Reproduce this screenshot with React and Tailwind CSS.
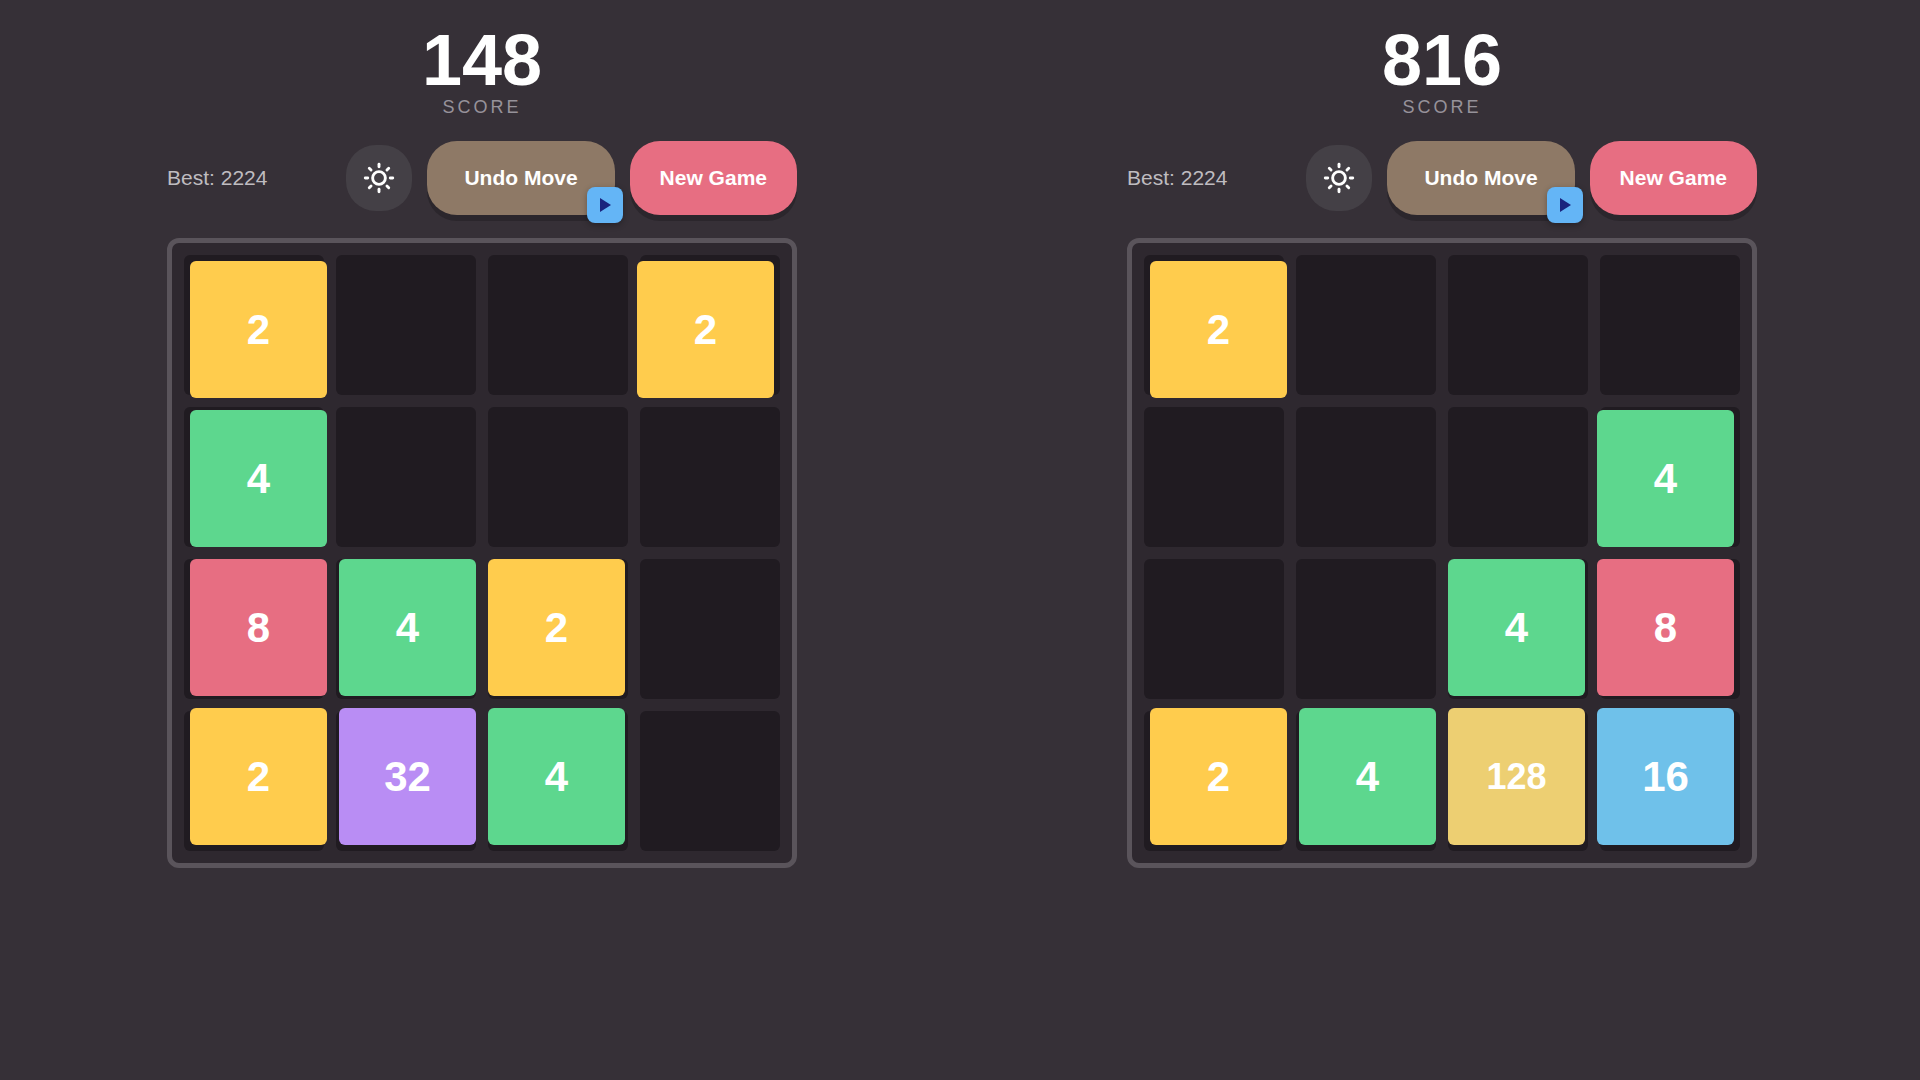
const TILE_COLORS = {
  2: "bg-[#ffcc4d] text-[42px]",
  4: "bg-[#5dd78e] text-[42px]",
  8: "bg-[#e76e82] text-[42px]",
  16: "bg-[#6fc1ea] text-[42px]",
  32: "bg-[#b98df4] text-[42px]",
  128: "bg-[#edcf72] text-[36px]",
};

const GAMES = [
  {
    id: "left",
    score: 148,
    best: 2224,
    cells: [2, 0, 0, 2, 4, 0, 0, 0, 8, 4, 2, 0, 2, 32, 4, 0],
  },
  {
    id: "right",
    score: 816,
    best: 2224,
    cells: [2, 0, 0, 0, 0, 0, 0, 4, 0, 0, 4, 8, 2, 4, 128, 16],
  },
];

function SunIcon() {
  const rays = [0, 45, 90, 135, 180, 225, 270, 315];
  return (
    <svg
      className="size-[30px] overflow-visible"
      viewBox="0 0 24 24"
      fill="none"
      stroke="white"
      strokeWidth="2.3"
      strokeLinecap="round"
      aria-hidden="true"
    >
      <circle cx="12" cy="12" r="5.1" />
      {rays.map((a) => (
        <path key={a} d="M12 1V3" transform={`rotate(${a} 12 12)`} />
      ))}
    </svg>
  );
}

function Board({ cells }) {
  return (
    <div className="relative aspect-square w-full rounded-[12px] border-5 border-[#5a545b] bg-[#2e282f] p-3">
      <div className="grid h-full grid-cols-4 grid-rows-4 gap-3">
        {cells.map((_, i) => (
          <div key={i} className="rounded-md bg-[#201b21]" />
        ))}
      </div>
      <div className="absolute inset-[18px] grid grid-cols-4 grid-rows-4 gap-3">
        {cells.map((v, i) =>
          v ? (
            <div
              key={i}
              className={`flex items-center justify-center rounded-md leading-none font-bold text-white ${TILE_COLORS[v]}`}
            >
              {v}
            </div>
          ) : (
            <div key={i} />
          )
        )}
      </div>
    </div>
  );
}

function Game({ score, best, cells }) {
  return (
    <section className="flex flex-col items-center pt-6 pl-1">
      <div className="w-full max-w-[630px]">
        <div className="text-center">
          <div className="text-[72px] leading-[72px] font-bold text-white">{score}</div>
          <div className="text-[18px] leading-[22px] tracking-[3px] text-[#96929a]">SCORE</div>
        </div>
        <div className="my-[23px] flex items-center justify-between">
          <div className="text-[21px] leading-8 text-[#bfbcc0]">Best: {best}</div>
          <div className="flex items-center gap-[15px]">
            <button
              type="button"
              aria-label="Toggle theme"
              className="flex size-[66px] items-center justify-center rounded-[30px] bg-[#444046]"
            >
              <SunIcon />
            </button>
            <button
              type="button"
              className="relative h-[74px] rounded-[30px] bg-[#8e7966] px-[37px] text-[21px] leading-8 font-bold text-white shadow-[0_6px_0_#2b262c]"
            >
              Undo Move
              <span className="absolute -right-2 -bottom-2 flex size-9 items-center justify-center rounded-lg bg-[#64b5f6] pl-0.5 shadow-[0_2px_6px_rgba(0,0,0,0.3)]">
                <svg className="h-[14px] w-[11px]" viewBox="0 0 11 14" aria-hidden="true">
                  <path d="M0 0L11 7L0 14Z" fill="#1a237e" />
                </svg>
              </span>
            </button>
            <button
              type="button"
              className="h-[74px] rounded-[30px] bg-[#e76e82] px-[30px] text-[21px] leading-8 font-bold text-white shadow-[0_6px_0_#2b262c]"
            >
              New Game
            </button>
          </div>
        </div>
        <Board cells={cells} />
      </div>
    </section>
  );
}

export default function App() {
  return (
    <main className="grid min-h-screen grid-cols-2 bg-[#363037] font-['Liberation_Sans',Arial,sans-serif]">
      {GAMES.map((g) => (
        <Game key={g.id} score={g.score} best={g.best} cells={g.cells} />
      ))}
    </main>
  );
}
